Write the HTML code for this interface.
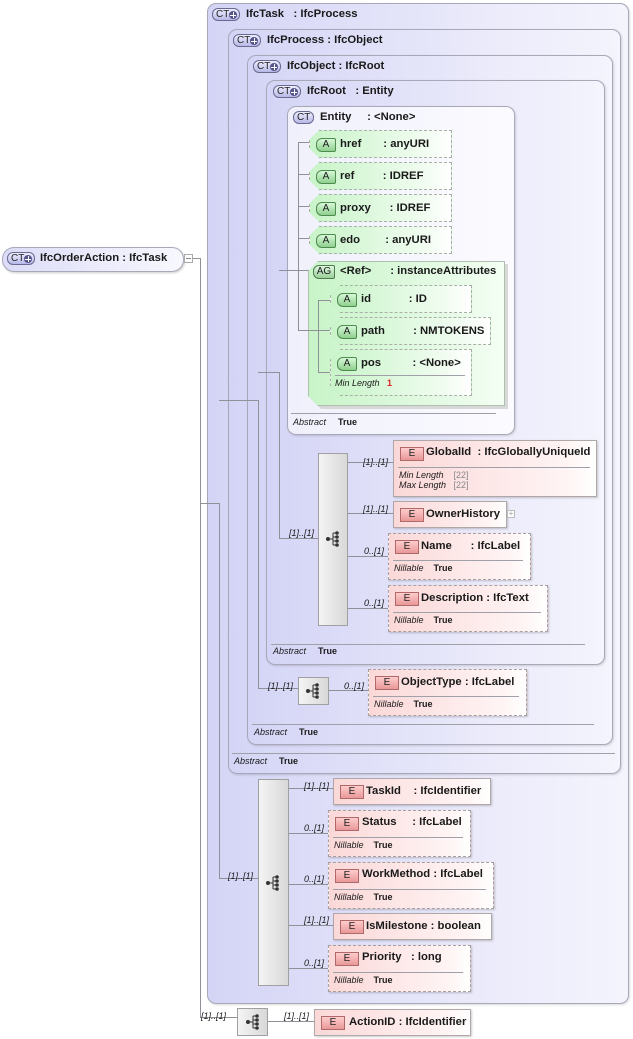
<!DOCTYPE html>
<html><head><meta charset="utf-8"><style>
*{box-sizing:border-box;margin:0;padding:0}
body{width:633px;height:1039px;background:#fff;position:relative;overflow:hidden;font-family:"Liberation Sans",Arial,sans-serif;font-size:11.3px;color:#1a1a1a}
.a{position:absolute}
.ct{position:absolute;border:1px solid #a8a8b8;border-radius:9px;background:linear-gradient(to right,#d4d4f6,#ececfb 70%,#f4f4fd);box-shadow:1px 1px 2px rgba(0,0,0,.15)}
.hdr{position:absolute;font-weight:bold;white-space:pre}
.bd{position:absolute;height:13px;border:1px solid #6a6a90;border-radius:6px;background:linear-gradient(#eeeeff,#b8b8e8);font-size:10px;font-weight:normal;line-height:11px;padding-left:3px;color:#222}
.bd i{position:absolute;right:2px;top:2px;width:8px;height:8px;border-radius:50%;background:#55558a;font-style:normal}
.bd i:before{content:"";position:absolute;left:1px;top:3.5px;width:6px;height:1px;background:#fff}
.bd i:after{content:"";position:absolute;left:3.5px;top:1px;width:1px;height:6px;background:#fff}
.abs{position:absolute;font-size:9px;white-space:pre}
.abs i{font-style:italic}
.abs b{margin-left:12px}
.hl{position:absolute;height:1px;background:#a0a0a8}
.el{position:absolute;border:1px solid #b0a8a8;background:linear-gradient(to right,#fbd8d8,#fff4f4 85%,#fff);box-shadow:1px 1px 2px rgba(0,0,0,.2)}
.el.d{border:1px dashed #a8a0a0}
.eb{position:absolute;left:6px;top:6px;width:24px;height:14px;border:1px solid #b06868;background:linear-gradient(#fcc,#e89898);font-size:10px;text-align:center;line-height:12px;color:#222}
.et{position:absolute;left:36px;top:6px;font-weight:bold;white-space:pre}
.att{position:absolute;border:1px dashed #a8b0a8;background:linear-gradient(to right,#c8f4c8,#f0fcf0 80%,#fff);clip-path:polygon(10px 0,100% 0,100% 100%,10px 100%,0 calc(100% - 10px),0 10px);box-shadow:1px 1px 2px rgba(0,0,0,.2)}
.ab{position:absolute;left:6px;top:7px;width:20px;height:14px;border:1px solid #4f8a4f;border-radius:6px 2px 2px 6px;background:linear-gradient(#d8f8d8,#8ed08e);font-size:10px;text-align:center;line-height:12px}
.at{position:absolute;left:30px;top:7px;font-weight:bold;white-space:pre}
.sm{position:absolute;font-size:9px;font-style:italic;white-space:pre}
.sq{position:absolute;border:1px solid #a0a0a0;background:linear-gradient(to right,#f4f4f4,#d8d8d8);}
.ml{position:absolute;font-size:9px;font-style:italic;white-space:pre}
</style></head><body>

<!-- root -->
<div class="a" style="left:2px;top:247px;width:182px;height:25px;border:1px solid #a8a8b8;border-radius:12px;background:linear-gradient(to right,#dcdcf8,#f8f8fe);box-shadow:1px 1px 2px rgba(0,0,0,.2)"></div>
<div class="bd" style="left:7px;top:252px;width:28px">CT<i></i></div>
<div class="hdr" style="left:40px;top:252px">IfcOrderAction : IfcTask</div>
<div class="a" style="left:184px;top:254px;width:9px;height:9px;border:1px solid #aaa;background:#fff"></div>
<div class="a" style="left:186px;top:258px;width:5px;height:1px;background:#888"></div>

<!-- containers -->
<div class="ct" style="left:207px;top:3px;width:422px;height:1001px"></div>
<div class="bd" style="left:212px;top:8px;width:28px">CT<i></i></div>
<div class="hdr" style="left:246px;top:8px">IfcTask   : IfcProcess</div>

<div class="ct" style="left:228px;top:29px;width:393px;height:745px"></div>
<div class="bd" style="left:233px;top:34px;width:28px">CT<i></i></div>
<div class="hdr" style="left:267px;top:34px">IfcProcess : IfcObject</div>
<div class="hl" style="left:232px;top:753px;width:383px"></div>
<div class="abs" style="left:234px;top:756px"><i>Abstract</i><b>True</b></div>

<div class="ct" style="left:247px;top:55px;width:366px;height:690px"></div>
<div class="bd" style="left:253px;top:60px;width:28px">CT<i></i></div>
<div class="hdr" style="left:287px;top:60px">IfcObject : IfcRoot</div>
<div class="hl" style="left:252px;top:724px;width:342px"></div>
<div class="abs" style="left:254px;top:727px"><i>Abstract</i><b>True</b></div>

<div class="ct" style="left:266px;top:80px;width:339px;height:585px"></div>
<div class="bd" style="left:273px;top:85px;width:28px">CT<i></i></div>
<div class="hdr" style="left:307px;top:85px">IfcRoot   : Entity</div>
<div class="hl" style="left:271px;top:644px;width:314px"></div>
<div class="abs" style="left:273px;top:646px"><i>Abstract</i><b>True</b></div>

<div class="ct" style="left:287px;top:106px;width:228px;height:329px;background:linear-gradient(to right,#f0f0fc,#fbfbff)"></div>
<div class="bd" style="left:293px;top:111px;width:21px">CT</div>
<div class="hdr" style="left:320px;top:111px">Entity     : &lt;None&gt;</div>
<div class="hl" style="left:291px;top:413px;width:205px"></div>
<div class="abs" style="left:293px;top:417px"><i>Abstract</i><b>True</b></div>

<!-- lines -->
<svg class="a" style="left:0;top:0" width="633" height="1039">
<g stroke="#909098" stroke-width="1" fill="none" shape-rendering="crispEdges">
<path d="M193 258.5H200.5V1017.5H237"/>
<path d="M200 503.5H219.5V878.5H258"/>
<path d="M219 400.5H258.5V688.5H298"/>
<path d="M258 372.5H279.5V538.5H318"/>
<path d="M279 270.5H298.5"/>
<path d="M298.5 142.5V330.5M298 142.5H309M298 174.5H309M298 206.5H309M298 238.5H309M298 270.5H309M298 330.5H318.5"/>
<path d="M347 462.5H393M347 513.5H393M347 556.5H388M347 608.5H388"/>
<path d="M328 690.5H368"/>
<path d="M288 788.5H333M288 833.5H328M288 884.5H328M288 925.5H333M288 968.5H328"/>
<path d="M268 1021.5H314"/>
</g></svg>

<!-- attributes -->
<div class="att" style="left:309px;top:130px;width:143px;height:28px"><div class="ab">A</div><div class="at">href       : anyURI</div></div>
<div class="att" style="left:309px;top:162px;width:143px;height:28px"><div class="ab">A</div><div class="at">ref         : IDREF</div></div>
<div class="att" style="left:309px;top:194px;width:143px;height:28px"><div class="ab">A</div><div class="at">proxy      : IDREF</div></div>
<div class="att" style="left:309px;top:226px;width:143px;height:28px"><div class="ab">A</div><div class="at">edo        : anyURI</div></div>

<div class="a" style="left:311px;top:264px;width:197px;height:145px;background:#d8d8d8;clip-path:polygon(10px 0,100% 0,100% 100%,10px 100%,0 calc(100% - 10px),0 10px)"></div>
<div class="a" style="left:308px;top:261px;width:197px;height:145px;border:1px solid #b0c0b0;background:linear-gradient(to right,#c8f4c8,#eafbea 80%,#f4fff4);clip-path:polygon(10px 0,100% 0,100% 100%,10px 100%,0 calc(100% - 10px),0 10px)"></div>
<svg class="a" style="left:0;top:0" width="633" height="1039">
<g stroke="#909098" stroke-width="1" fill="none" shape-rendering="crispEdges">
<path d="M298 330.5H318.5M318.5 300.5V372.5M318 300.5H331M318 330.5H331M318 372.5H331"/>
</g></svg>
<div class="a" style="left:313px;top:265px;width:22px;height:14px;border:1px solid #4f7a4f;border-radius:6px 2px 2px 6px;background:linear-gradient(#e0f8e0,#9ad09a);font-size:10px;text-align:center;line-height:12px">AG</div>
<div class="hdr" style="left:340px;top:265px">&lt;Ref&gt;      : instanceAttributes</div>
<div class="att" style="left:330px;top:285px;width:142px;height:28px"><div class="ab">A</div><div class="at">id            : ID</div></div>
<div class="att" style="left:330px;top:317px;width:161px;height:28px"><div class="ab">A</div><div class="at">path         : NMTOKENS</div></div>
<div class="att" style="left:330px;top:349px;width:142px;height:47px"><div class="ab">A</div><div class="at">pos          : &lt;None&gt;</div>
<div class="hl" style="left:4px;top:25px;width:130px"></div><div class="sm" style="left:4px;top:28px">Min Length   <span style="color:#d22;font-style:normal;font-weight:bold">1</span></div></div>

<!-- sequences -->
<div class="sq" style="left:318px;top:453px;width:30px;height:173px"></div>
<div class="sq" style="left:298px;top:677px;width:31px;height:28px"></div>
<div class="sq" style="left:258px;top:779px;width:31px;height:207px"></div>
<div class="sq" style="left:237px;top:1008px;width:31px;height:28px"></div>
<svg class="a" style="left:0;top:0" width="633" height="1039">
<defs><g id="s" fill="#333" stroke="#333" stroke-width="1"><circle cx="0" cy="0" r="2" stroke="none"/><path d="M2 0H5M5-6V6M5-6H9M5-2H9M5 2H9M5 6H9" fill="none"/><circle cx="9" cy="-6" r="1.8" stroke="none"/><circle cx="9" cy="-2" r="1.8" stroke="none"/><circle cx="9" cy="2" r="1.8" stroke="none"/><circle cx="9" cy="6" r="1.8" stroke="none"/></g></defs>
<use href="#s" x="328" y="539"/><use href="#s" x="308" y="691"/><use href="#s" x="268" y="883"/><use href="#s" x="248" y="1022"/>
</svg>

<!-- multiplicities -->
<div class="ml" style="left:289px;top:528px">[1]..[1]</div>
<div class="ml" style="left:363px;top:457px">[1]..[1]</div>
<div class="ml" style="left:363px;top:504px">[1]..[1]</div>
<div class="ml" style="left:364px;top:546px">0..[1]</div>
<div class="ml" style="left:364px;top:598px">0..[1]</div>
<div class="ml" style="left:268px;top:681px">[1]..[1]</div>
<div class="ml" style="left:344px;top:681px">0..[1]</div>
<div class="ml" style="left:228px;top:871px">[1]..[1]</div>
<div class="ml" style="left:304px;top:781px">[1]..[1]</div>
<div class="ml" style="left:304px;top:823px">0..[1]</div>
<div class="ml" style="left:304px;top:874px">0..[1]</div>
<div class="ml" style="left:304px;top:915px">[1]..[1]</div>
<div class="ml" style="left:304px;top:958px">0..[1]</div>
<div class="ml" style="left:201px;top:1011px">[1]..[1]</div>
<div class="ml" style="left:284px;top:1011px">[1]..[1]</div>

<!-- elements -->
<div class="el" style="left:393px;top:440px;width:204px;height:57px"><div class="eb">E</div><div class="et" style="left:32px;top:5px">GlobalId  : IfcGloballyUniqueId</div>
<div class="hl" style="left:4px;top:26px;width:192px"></div>
<div class="sm" style="left:5px;top:29px">Min Length    <span style="color:#888;font-style:normal">[22]</span></div>
<div class="sm" style="left:5px;top:39px">Max Length   <span style="color:#888;font-style:normal">[22]</span></div></div>
<div class="el" style="left:393px;top:501px;width:114px;height:27px"><div class="eb">E</div><div class="et" style="left:32px;top:6px">OwnerHistory</div></div>
<div class="a" style="left:507px;top:510px;width:8px;height:8px;border:1px solid #bbb;background:#fff;font-size:8px;line-height:6px;text-align:center;color:#999">+</div>
<div class="el d" style="left:388px;top:533px;width:143px;height:47px"><div class="eb">E</div><div class="et" style="left:32px">Name      : IfcLabel</div><div class="hl" style="left:4px;top:26px;width:130px"></div><div class="sm" style="left:5px;top:29px">Nillable    <b style="font-style:normal">True</b></div></div>
<div class="el d" style="left:388px;top:585px;width:160px;height:47px"><div class="eb">E</div><div class="et" style="left:32px">Description : IfcText</div><div class="hl" style="left:4px;top:26px;width:148px"></div><div class="sm" style="left:5px;top:29px">Nillable    <b style="font-style:normal">True</b></div></div>
<div class="el d" style="left:368px;top:669px;width:159px;height:47px"><div class="eb">E</div><div class="et" style="left:32px">ObjectType : IfcLabel</div><div class="hl" style="left:4px;top:26px;width:146px"></div><div class="sm" style="left:5px;top:29px">Nillable    <b style="font-style:normal">True</b></div></div>

<div class="el" style="left:333px;top:778px;width:158px;height:27px"><div class="eb">E</div><div class="et" style="left:32px">TaskId    : IfcIdentifier</div></div>
<div class="el d" style="left:328px;top:810px;width:143px;height:47px"><div class="eb">E</div><div class="et" style="left:33px;top:5px">Status     : IfcLabel</div><div class="hl" style="left:4px;top:26px;width:130px"></div><div class="sm" style="left:5px;top:29px">Nillable    <b style="font-style:normal">True</b></div></div>
<div class="el d" style="left:328px;top:862px;width:166px;height:47px"><div class="eb">E</div><div class="et" style="left:33px;top:5px">WorkMethod : IfcLabel</div><div class="hl" style="left:4px;top:26px;width:153px"></div><div class="sm" style="left:5px;top:29px">Nillable    <b style="font-style:normal">True</b></div></div>
<div class="el" style="left:333px;top:913px;width:159px;height:27px"><div class="eb">E</div><div class="et" style="left:32px">IsMilestone : boolean</div></div>
<div class="el d" style="left:328px;top:945px;width:143px;height:47px"><div class="eb">E</div><div class="et" style="left:33px;top:5px">Priority   : long</div><div class="hl" style="left:4px;top:26px;width:130px"></div><div class="sm" style="left:5px;top:29px">Nillable    <b style="font-style:normal">True</b></div></div>
<div class="el" style="left:314px;top:1009px;width:157px;height:27px"><div class="eb">E</div><div class="et" style="left:34px">ActionID : IfcIdentifier</div></div>

</body></html>
